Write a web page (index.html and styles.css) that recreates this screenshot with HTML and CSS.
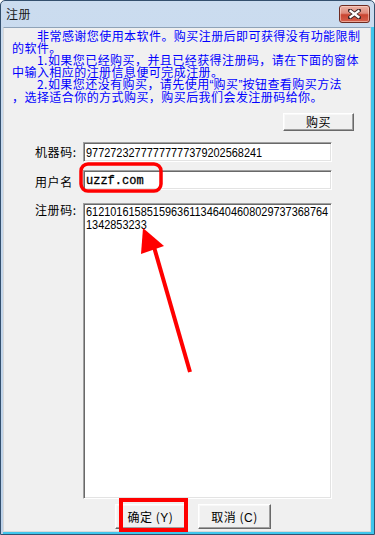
FILE: index.html
```html
<!DOCTYPE html>
<html lang="zh-CN">
<head>
<meta charset="utf-8">
<title>注册</title>
<link rel="stylesheet" href="styles.css">
</head>
<body>
<div class="window">
  <div class="titlebar">
    <span class="title">注册</span>
    <button class="close" aria-label="关闭">
      <svg width="13" height="10" viewBox="0 0 13 10">
        <path d="M2 1.5 L11 8.5 M11 1.5 L2 8.5" stroke="#3a2424" stroke-width="4" stroke-linecap="square"/>
        <path d="M2.5 2 L10.5 8 M10.5 2 L2.5 8" stroke="#ffffff" stroke-width="2.2" stroke-linecap="square"/>
      </svg>
    </button>
  </div>
  <div class="frame">
    <div class="client">
      <div class="intro">
        <p class="line indent">非常感谢您使用本软件。购买注册后即可获得没有功能限制</p>
        <p class="line">的软件。</p>
        <p class="line indent">1.如果您已经购买，并且已经获得注册码，请在下面的窗体</p>
        <p class="line">中输入相应的注册信息便可完成注册。</p>
        <p class="line indent">2.如果您还没有购买，请先使用<span class="quote">“</span>购买<span class="quote">”</span>按钮查看购买方法</p>
        <p class="line">，选择适合你的方式购买，购买后我们会发注册码给你。</p>
      </div>
      <div class="buy-row">
        <button class="btn btn-buy">购买</button>
      </div>
      <div class="form">
        <label class="label">机器码:</label>
        <div class="field"><span class="digits">97727232777777777379202568241</span></div>
        <label class="label label-low">用户名</label>
        <div class="field"><span class="mono">uzzf.com</span></div>
        <label class="label label-top">注册码:</label>
        <div class="field field-area">
          <span class="digits">6121016158515963611346404608029737368764</span>
          <span class="digits">1342853233</span>
        </div>
      </div>
      <div class="actions">
        <button class="btn btn-ok">确定 (<u>Y</u>)</button>
        <button class="btn btn-cancel">取消 (<u>C</u>)</button>
      </div>
    </div>
  </div>
</div>
<svg class="annot" width="375" height="535" viewBox="0 0 375 535">
  <rect x="81" y="164" width="80" height="27" rx="7" ry="7" fill="none" stroke="#ff0000" stroke-width="3.5"/>
  <line x1="190" y1="372" x2="154" y2="247" stroke="#ff0000" stroke-width="4"/>
  <polygon points="143,228 141,254 164,246" fill="#ff0000"/>
  <rect x="121" y="500" width="65" height="30" fill="none" stroke="#ff0000" stroke-width="4"/>
</svg>
</body>
</html>
```
FILE: styles.css
```css
* { box-sizing: border-box; }

body {
  margin: 0;
  position: relative;
  width: 375px;
  height: 535px;
  font-family: "Noto Sans CJK SC", "Noto Sans", sans-serif;
  background: #ffffff;
}

.window {
  width: 375px;
  height: 535px;
  border: 1px solid #34506e;
  border-radius: 5px 5px 0 0;
  background: linear-gradient(180deg, #cbdcef 0%, #bdd2e9 100%);
  display: flex;
  flex-direction: column;
}

.titlebar {
  height: 26px;
  flex: none;
  display: flex;
  align-items: flex-start;
  padding: 0 4px 0 5px;
}

.title {
  margin-top: 6px;
  font-size: 12px;
  line-height: 14px;
  color: #1a1a1a;
  letter-spacing: 0.5px;
}

.close {
  margin-left: auto;
  margin-top: 4px;
  width: 31px;
  height: 18px;
  padding: 0;
  border: 1px solid #6e2b21;
  border-radius: 3px;
  background: linear-gradient(180deg, #ebb3a6 0%, #df8a7b 45%, #c94531 55%, #d6614d 100%);
  box-shadow: inset 0 0 0 1px rgba(255, 220, 210, 0.55);
  display: flex;
  align-items: center;
  justify-content: center;
}

.frame {
  flex: 1;
  display: flex;
  margin-left: 2px;
  border-right: 3px solid #3fc6ec;
  border-bottom: 2px solid #3fc6ec;
}

.client {
  flex: 1;
  display: flex;
  flex-direction: column;
  background: #f0f0f0;
  border: 1px solid;
  border-color: #8fa3b8 #d8d8d8 #d8d8d8 #d8d8d8;
}

.intro {
  padding: 2px 0 0 8px;
  color: #0000ff;
  font-size: 12px;
  line-height: 12px;
  letter-spacing: 0.44px;
}

.line {
  margin: 0;
  white-space: nowrap;
}

.indent { text-indent: 25px; }

.quote {
  font-family: "Liberation Sans", sans-serif;
  letter-spacing: 0;
}

.buy-row {
  display: flex;
  justify-content: flex-end;
  padding-right: 16px;
  margin-top: 10px;
}

.btn {
  padding: 0;
  font-family: "Noto Sans CJK SC", sans-serif;
  font-size: 12px;
  color: #000000;
  background: #f0f0f0;
  border: 1px solid;
  border-color: #ffffff #696969 #696969 #ffffff;
  box-shadow: inset -1px -1px 0 #a0a0a0, inset 1px 1px 0 #f8f8f8;
  letter-spacing: 0.5px;
}

.btn u { text-decoration: none; font-family: "Liberation Sans", sans-serif; }

.btn-buy {
  width: 71px;
  height: 18px;
  line-height: 14px;
}

.form {
  margin-top: 11px;
  padding-left: 31px;
  display: grid;
  grid-template-columns: 48px 249px;
  row-gap: 8px;
  align-items: center;
}

.label {
  font-size: 12px;
  line-height: 12px;
  color: #000000;
  letter-spacing: 0.6px;
}

.label-low { padding-top: 4px; }

.label-top {
  align-self: start;
  margin-top: 5px;
  padding-top: 1px;
}

.field {
  height: 20px;
  background: #ffffff;
  border: 1px solid;
  border-color: #a0a0a0 #ffffff #ffffff #a0a0a0;
  box-shadow: inset 1px 1px 0 #696969, inset -1px -1px 0 #e3e3e3;
  padding: 1px 0 0 2px;
  display: flex;
  flex-direction: column;
  justify-content: center;
}

.field-area {
  height: 296px;
  margin-top: 5px;
  justify-content: flex-start;
  padding-top: 1px;
}

.digits {
  display: block;
  white-space: nowrap;
  font-family: "Liberation Sans", sans-serif;
  font-size: 13px;
  line-height: 13px;
  color: #000000;
  transform: scaleX(0.84);
  transform-origin: left center;
}

.mono {
  font-family: "Liberation Mono", monospace;
  font-size: 12px;
  line-height: 14px;
  color: #000000;
  -webkit-text-stroke: 0.3px #000000;
}

.actions {
  display: flex;
  gap: 12px;
  padding-left: 111px;
  margin-top: 5px;
}

.btn-ok {
  width: 71px;
  height: 25px;
}

.btn-cancel {
  width: 73px;
  height: 25px;
}

.annot {
  position: absolute;
  top: 0;
  left: 0;
  pointer-events: none;
}
```
